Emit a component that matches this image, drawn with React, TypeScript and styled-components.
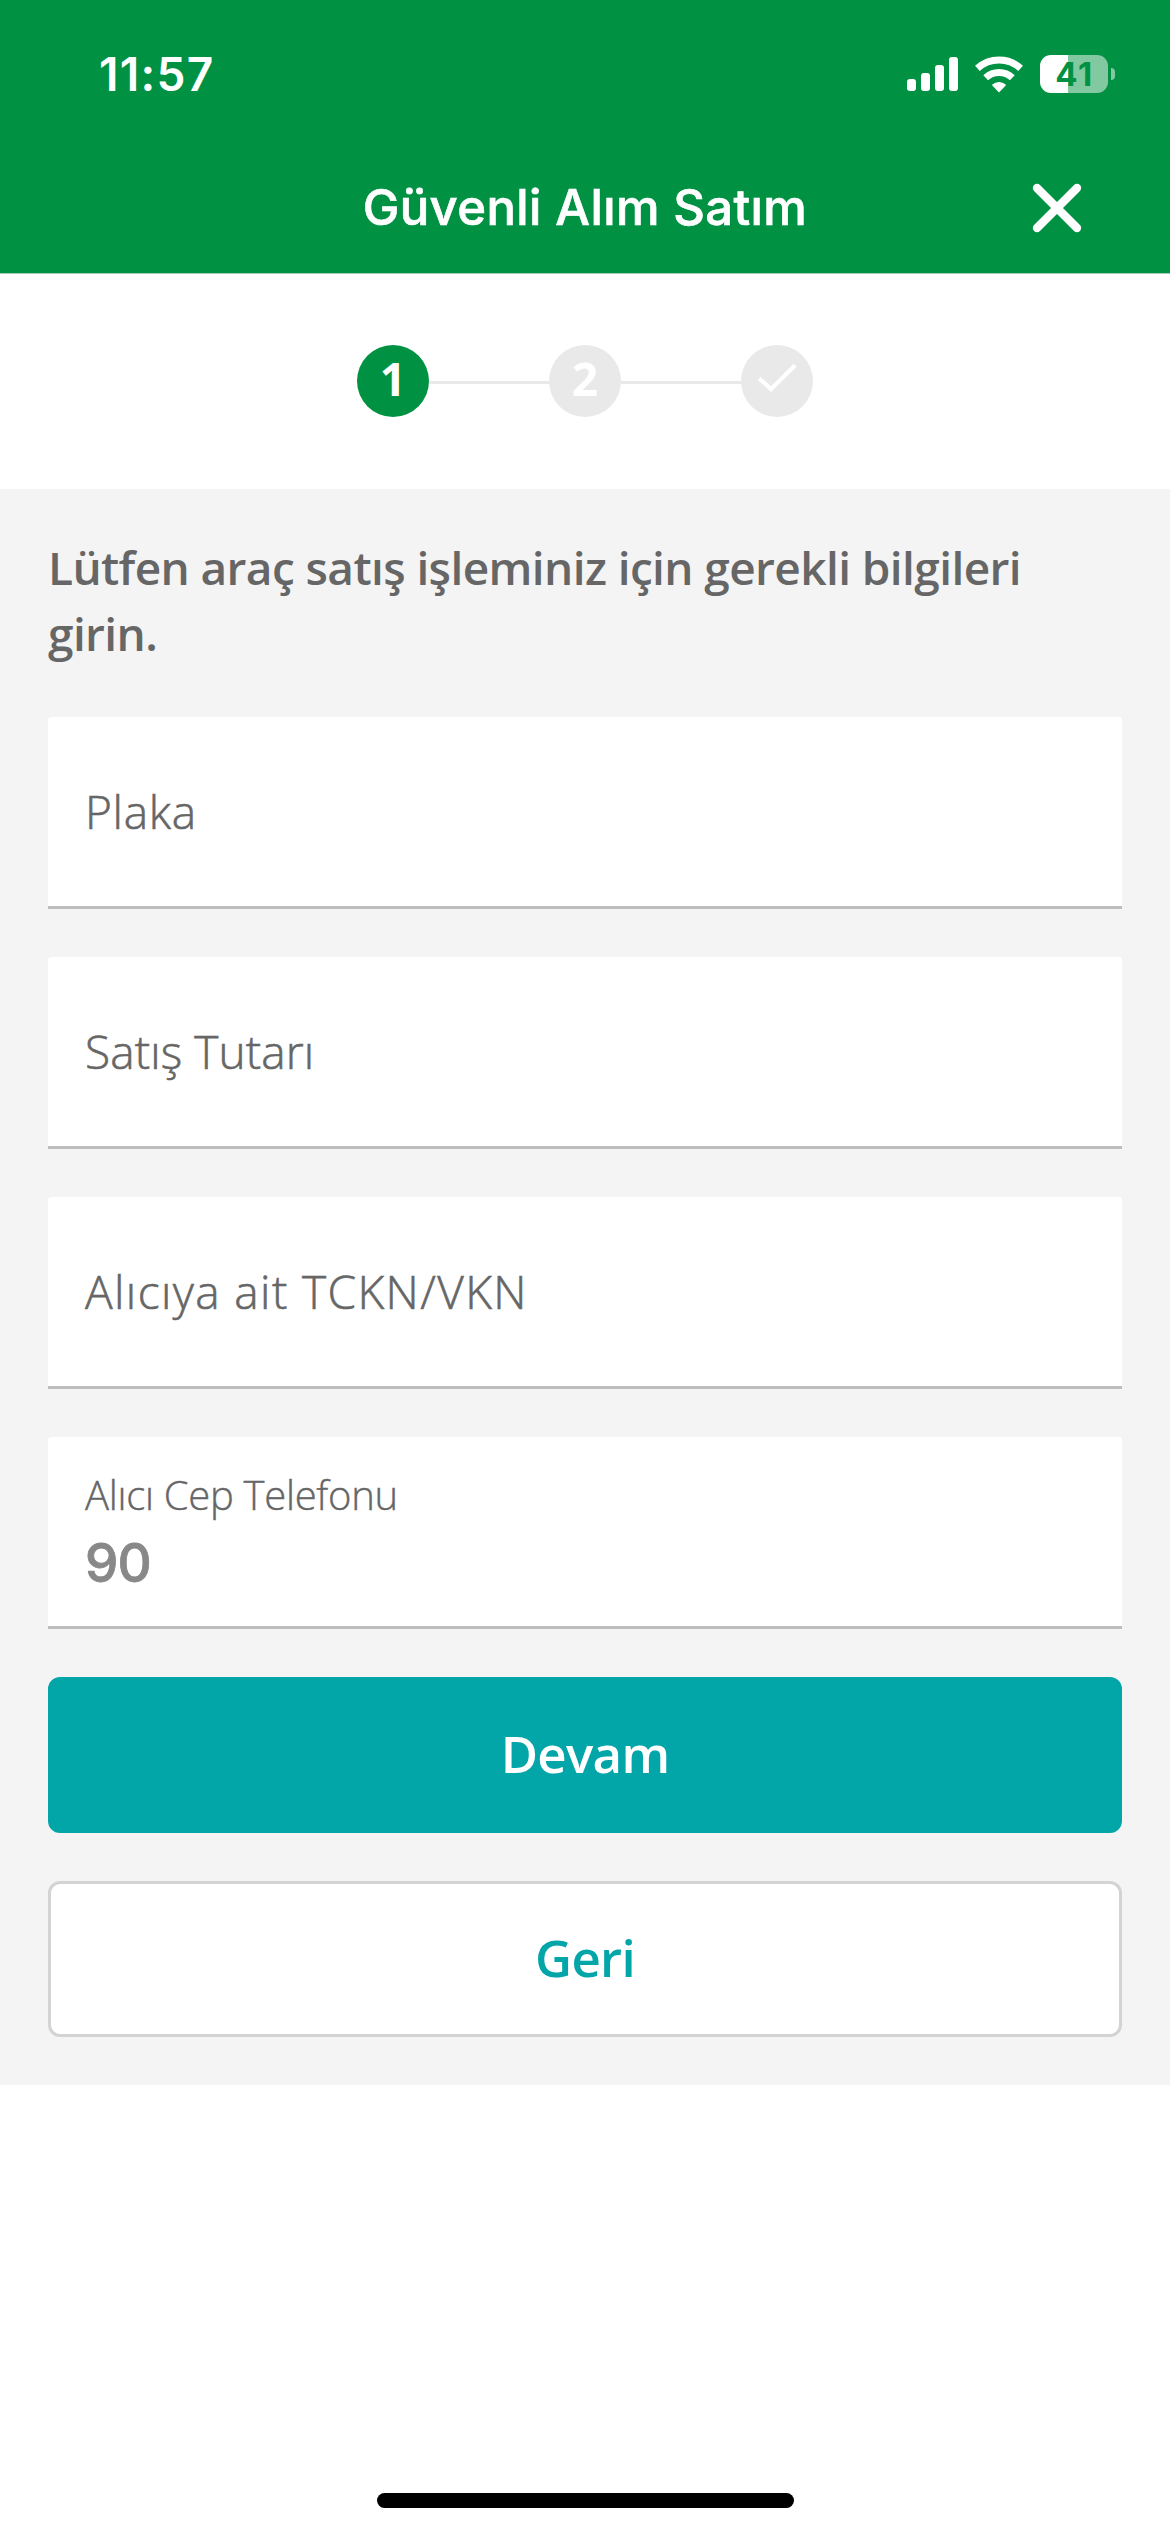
import React from "react";
import styled, { createGlobalStyle } from "styled-components";

const green = "#009142";
const teal = "#02a5a8";
const gray = "#666666";
const uiFont = `"Open Sans", "Noto Sans", sans-serif`;
const systemFont = `Inter, "Liberation Sans", sans-serif`;

const GlobalStyle = createGlobalStyle`
  *, *::before, *::after { box-sizing: border-box; }
  body { margin: 0; background: #ffffff; font-family: ${uiFont}; }
`;

const Screen = styled.div`
  display: flex;
  flex-direction: column;
  width: 1170px;
  min-height: 2532px;
  background: #ffffff;
`;

const Header = styled.header`
  height: 274px;
  background: ${green};
  color: #ffffff;
  font-family: ${systemFont};
  border-bottom: 1px solid #a9c9b6;
`;

const StatusBar = styled.div`
  display: flex;
  align-items: center;
  justify-content: space-between;
  height: 148px;
  padding: 0 55px 0 99px;
`;

const Clock = styled.span`
  font-size: 46px;
  font-weight: 600;
  letter-spacing: 1.3px;
`;

const StatusIcons = styled.div`
  display: flex;
  align-items: center;
  gap: 17px;
`;

const SignalBars = styled.div`
  display: flex;
  align-items: flex-end;
  gap: 5px;
  height: 34px;
`;

const SignalBar = styled.span<{ $height: number }>`
  width: 9px;
  height: ${(p) => p.$height}px;
  border-radius: 3px;
  background: #ffffff;
`;

const Battery = styled.div`
  display: flex;
  align-items: center;
  gap: 3px;
`;

const BatteryBody = styled.div`
  display: flex;
  align-items: center;
  justify-content: center;
  width: 68px;
  height: 38px;
  padding-left: 1px;
  border-radius: 11px;
  background: linear-gradient(to right, #ffffff 28px, #82c9a1 28px);
  color: ${green};
  font-size: 33px;
  font-weight: 700;
  letter-spacing: 1.6px;
  line-height: 38px;
`;

const BatteryCap = styled.span`
  width: 4px;
  height: 12px;
  border-radius: 0 4px 4px 0;
  background: #82c9a1;
`;

const NavBar = styled.div`
  display: grid;
  grid-template-columns: 1fr auto 1fr;
  align-items: center;
  height: 119px;
  padding: 0 88px;
`;

const Title = styled.h1`
  grid-column: 2;
  margin: 0;
  font-size: 49px;
  font-weight: 500;
  line-height: 60px;
  letter-spacing: 0.4px;
  -webkit-text-stroke: 0.7px #ffffff;
`;

const CloseButton = styled.button`
  display: flex;
  justify-self: end;
  padding: 0;
  border: 0;
  background: none;
  color: inherit;
`;

const Stepper = styled.section`
  display: flex;
  align-items: center;
  justify-content: center;
  height: 215px;
  padding-bottom: 1px;
`;

const Step = styled.div<{ $active?: boolean }>`
  display: flex;
  align-items: center;
  justify-content: center;
  width: 72px;
  height: 72px;
  padding-bottom: 6px;
  border-radius: 50%;
  background: ${(p) => (p.$active ? green : "#e9e9e9")};
  color: #ffffff;
  font-size: 46px;
  font-weight: 700;
  line-height: 66px;
`;

const Connector = styled.span`
  width: 120px;
  height: 3px;
  margin-top: 3px;
  background: #e9e9e9;
`;

const Form = styled.main`
  display: flex;
  flex-direction: column;
  gap: 48px;
  padding: 45px 48px 48px;
  background: #f4f4f4;
`;

const Intro = styled.p`
  margin: 0 0 3px;
  color: ${gray};
  font-size: 46px;
  font-weight: 600;
  line-height: 66px;
  letter-spacing: -0.6px;
`;

const Field = styled.div`
  display: flex;
  flex-direction: column;
  justify-content: center;
  height: 192px;
  padding: 0 37px 2px;
  border-bottom: 3px solid #bdbdbd;
  border-radius: 3px 3px 0 0;
  background: #ffffff;
  color: ${gray};
`;

const Placeholder = styled.span<{ $spacing: number }>`
  font-size: 46px;
  font-weight: 300;
  line-height: 66px;
  letter-spacing: ${(p) => p.$spacing}px;
  -webkit-text-stroke: 0.6px ${gray};
`;

const FloatingLabel = styled.span`
  padding-top: 4px;
  font-size: 40px;
  font-weight: 300;
  line-height: 61px;
  letter-spacing: -0.3px;
  -webkit-text-stroke: 0.4px ${gray};
`;

const FieldValue = styled.span`
  color: #888888;
  font-family: ${systemFont};
  font-size: 53px;
  font-weight: 500;
  line-height: 76px;
  letter-spacing: -0.8px;
  -webkit-text-stroke: 0.8px #888888;
`;

const Button = styled.button<{ $primary?: boolean }>`
  height: 156px;
  padding: 0 0 4px;
  border: 3px solid ${(p) => (p.$primary ? teal : "#d3d3d3")};
  border-radius: 12px;
  background: ${(p) => (p.$primary ? teal : "#ffffff")};
  color: ${(p) => (p.$primary ? "#ffffff" : teal)};
  font-family: ${uiFont};
  font-size: 51px;
  font-weight: 600;
  letter-spacing: -0.7px;
`;

const HomeIndicator = styled.div`
  align-self: center;
  width: 417px;
  height: 15px;
  margin: auto 0 24px;
  border-radius: 8px;
  background: #000000;
`;

const WifiIcon = () => (
  <svg width="48" height="37" viewBox="0 0 48 37" fill="none">
    <path d="M2.4 12.4 A32 32 0 0 1 45.6 12.4" stroke="#fff" strokeWidth="7" />
    <path d="M10.7 21.7 A19.5 19.5 0 0 1 37.3 21.7" stroke="#fff" strokeWidth="7" />
    <path
      d="M17.8 29 A9.3 9.3 0 0 1 30.2 29 L24 35.4 Z"
      fill="#fff"
      stroke="#fff"
      strokeWidth="1.4"
      strokeLinejoin="round"
    />
  </svg>
);

const CloseIcon = () => (
  <svg width="50" height="50" viewBox="0 0 50 50" fill="none">
    <path d="M5 5 L45 45 M45 5 L5 45" stroke="#fff" strokeWidth="8.4" strokeLinecap="round" />
  </svg>
);

const CheckIcon = () => (
  <svg width="40" height="30" viewBox="0 0 40 30" fill="none">
    <path d="M2.2 15.4 L14 26.2 L38.2 2.2" stroke="#fff" strokeWidth="4.2" />
  </svg>
);

const placeholders = [
  { text: "Plaka", spacing: 0.7 },
  { text: "Satış Tutarı", spacing: 0.1 },
  { text: "Alıcıya ait TCKN/VKN", spacing: 1.4 },
];

export default function App() {
  return (
    <Screen>
      <GlobalStyle />
      <Header>
        <StatusBar>
          <Clock>11:57</Clock>
          <StatusIcons>
            <SignalBars>
              {[12, 18, 26, 34].map((h) => (
                <SignalBar key={h} $height={h} />
              ))}
            </SignalBars>
            <WifiIcon />
            <Battery>
              <BatteryBody>41</BatteryBody>
              <BatteryCap />
            </Battery>
          </StatusIcons>
        </StatusBar>
        <NavBar>
          <Title>Güvenli Alım Satım</Title>
          <CloseButton aria-label="Kapat">
            <CloseIcon />
          </CloseButton>
        </NavBar>
      </Header>
      <Stepper>
        <Step $active>1</Step>
        <Connector />
        <Step>2</Step>
        <Connector />
        <Step>
          <CheckIcon />
        </Step>
      </Stepper>
      <Form>
        <Intro>Lütfen araç satış işleminiz için gerekli bilgileri girin.</Intro>
        {placeholders.map((p) => (
          <Field key={p.text}>
            <Placeholder $spacing={p.spacing}>{p.text}</Placeholder>
          </Field>
        ))}
        <Field>
          <FloatingLabel>Alıcı Cep Telefonu</FloatingLabel>
          <FieldValue>90</FieldValue>
        </Field>
        <Button $primary>Devam</Button>
        <Button>Geri</Button>
      </Form>
      <HomeIndicator />
    </Screen>
  );
}
